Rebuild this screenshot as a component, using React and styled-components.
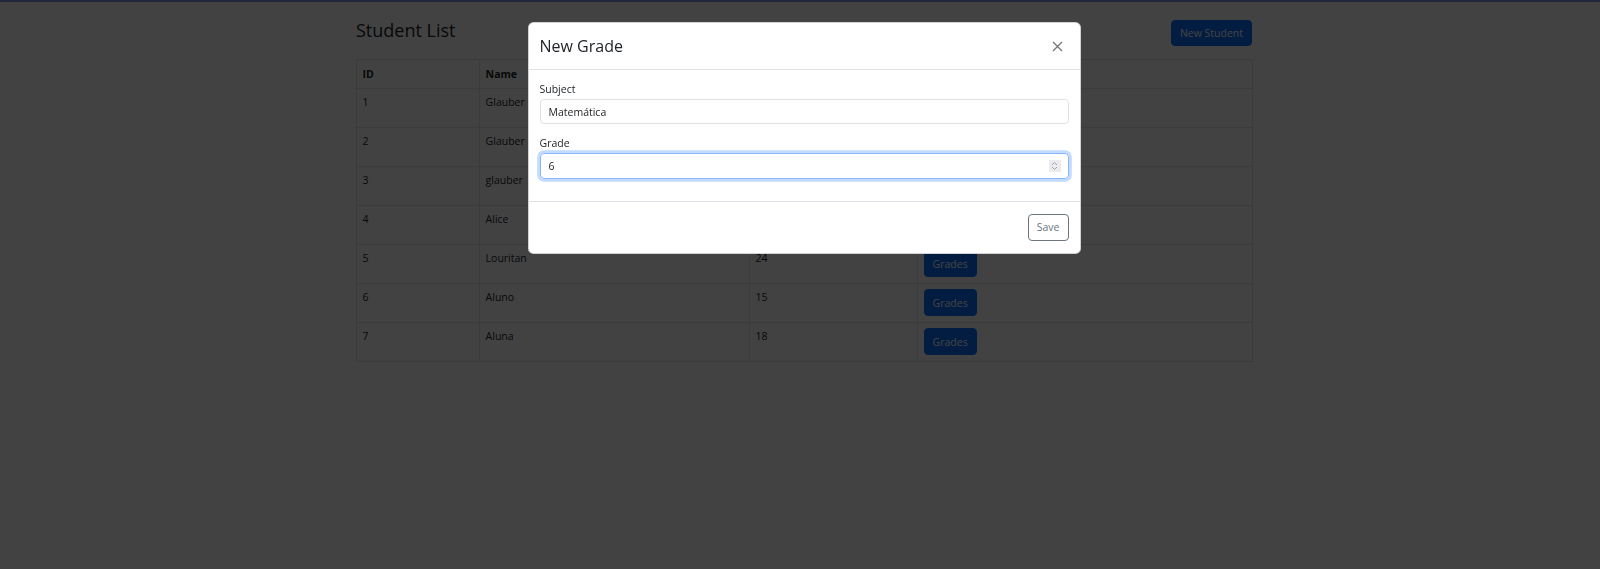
import React from "react";
import styled, { createGlobalStyle } from "styled-components";

const students = [
  { id: 1, name: "Glauber", age: 30 },
  { id: 2, name: "Glauber", age: 30 },
  { id: 3, name: "glauber", age: 30 },
  { id: 4, name: "Alice", age: 22 },
  { id: 5, name: "Louritan", age: 24 },
  { id: 6, name: "Aluno", age: 15 },
  { id: 7, name: "Aluna", age: 18 },
];

function App() {
  return (
    <>
      <GlobalStyle />
      <TopBar />
      <Page>
        <Container>
          <Header>
            <Title>Student List</Title>
            <PrimaryButton>New Student</PrimaryButton>
          </Header>
          <Table>
            <colgroup>
              <col style={{ width: 123 }} />
              <col style={{ width: 270 }} />
              <col style={{ width: 168 }} />
              <col style={{ width: 335 }} />
            </colgroup>
            <thead>
              <tr>
                <Th>ID</Th>
                <Th>Name</Th>
                <Th>Age</Th>
                <Th>Actions</Th>
              </tr>
            </thead>
            <tbody>
              {students.map((s) => (
                <tr key={s.id}>
                  <Td>{s.id}</Td>
                  <Td>{s.name}</Td>
                  <Td>{s.age}</Td>
                  <Td>
                    <PrimaryButton $row>Grades</PrimaryButton>
                  </Td>
                </tr>
              ))}
            </tbody>
          </Table>
        </Container>
      </Page>

      <Backdrop />
      <ModalWrapper>
        <Dialog>
          <ModalHeader>
            <ModalTitle>New Grade</ModalTitle>
            <CloseButton aria-label="Close">
              <svg width="11" height="11" viewBox="0 0 11 11">
                <path
                  d="M1 1 L10 10 M10 1 L1 10"
                  stroke="#757575"
                  strokeWidth="1.3"
                  fill="none"
                />
              </svg>
            </CloseButton>
          </ModalHeader>
          <ModalBody>
            <Field>
              <Label>Subject</Label>
              <InputShell>
                <Input defaultValue="Matemática" />
              </InputShell>
            </Field>
            <Field>
              <Label>Grade</Label>
              <InputShell $focused>
                <Input defaultValue="6" />
                <Spinner>
                  <svg width="7" height="10" viewBox="0 0 7 10">
                    <path
                      d="M1 4 L3.5 1.5 L6 4 M1 6 L3.5 8.5 L6 6"
                      stroke="#9a9a9a"
                      strokeWidth="0.9"
                      fill="none"
                    />
                  </svg>
                </Spinner>
              </InputShell>
            </Field>
          </ModalBody>
          <ModalFooter>
            <OutlineButton>Save</OutlineButton>
          </ModalFooter>
        </Dialog>
      </ModalWrapper>
    </>
  );
}

export default App;

const GlobalStyle = createGlobalStyle`
  html, body {
    margin: 0;
    background: #fff;
  }
  body {
    font-family: "Open Sans", "Noto Sans", sans-serif;
    font-size: 10.5px;
    line-height: 1.6;
    color: #212529;
  }
`;

const TopBar = styled.div`
  height: 2px;
  background: #8793e0;
`;

const Page = styled.div`
  padding: 18px 0 0 8px;
`;

const Container = styled.div`
  width: 896px;
  margin: 0 auto;
`;

const Header = styled.div`
  display: flex;
  justify-content: space-between;
  align-items: flex-start;
  margin-bottom: 13px;
`;

const Title = styled.h2`
  margin: 0;
  font-size: 18px;
  font-weight: 400;
  line-height: 1.2;
`;

const PrimaryButton = styled.button`
  height: ${(p) => (p.$row ? "27px" : "26px")};
  padding: 0 8px;
  font-family: inherit;
  font-size: 10.5px;
  color: #fff;
  background: #0d6efd;
  border: 1px solid #0d6efd;
  border-radius: 4px;
`;

const Table = styled.table`
  width: 896px;
  table-layout: fixed;
  border-collapse: collapse;
`;

const Th = styled.th`
  padding: 5.6px;
  text-align: left;
  font-weight: 700;
  border: 1px solid #dee2e6;
`;

const Td = styled.td`
  padding: 5.5px 5.6px;
  vertical-align: top;
  border: 1px solid #dee2e6;
`;

const Backdrop = styled.div`
  position: fixed;
  inset: 0;
  background: rgba(0, 0, 0, 0.74);
  z-index: 10;
`;

const ModalWrapper = styled.div`
  position: fixed;
  inset: 0;
  z-index: 20;
  display: flex;
  justify-content: center;
  align-items: flex-start;
  padding: 22px 0 0 8px;
`;

const Dialog = styled.div`
  width: 551px;
  background: #fff;
  border: 1px solid rgba(0, 0, 0, 0.175);
  border-radius: 5.6px;
  display: flex;
  flex-direction: column;
`;

const ModalHeader = styled.div`
  display: flex;
  align-items: center;
  justify-content: space-between;
  padding: 11px;
  border-bottom: 1px solid #dee2e6;
`;

const ModalTitle = styled.h5`
  margin: 0;
  font-size: 16px;
  font-weight: 400;
  line-height: 24px;
`;

const CloseButton = styled.button`
  display: flex;
  align-items: center;
  justify-content: center;
  width: 16px;
  height: 16px;
  padding: 0;
  margin-right: 3px;
  background: none;
  border: 0;
`;

const ModalBody = styled.div`
  padding: 11px;
`;

const Field = styled.div`
  margin-bottom: 11px;
`;

const Label = styled.label`
  display: block;
  margin-bottom: 1px;
`;

const InputShell = styled.div`
  display: flex;
  align-items: center;
  height: 25.5px;
  box-sizing: border-box;
  padding: 0 7px 0 8px;
  border: 1px solid ${(p) => (p.$focused ? "#86b7fe" : "#dee2e6")};
  border-radius: 4px;
  box-shadow: ${(p) =>
    p.$focused ? "0 0 0 2.8px rgba(13, 110, 253, 0.25)" : "none"};
`;

const Input = styled.input`
  flex: 1;
  min-width: 0;
  padding: 0;
  border: 0;
  outline: none;
  background: transparent;
  font-family: inherit;
  font-size: 10.5px;
  color: #212529;
`;

const Spinner = styled.span`
  display: flex;
  align-items: center;
  justify-content: center;
  width: 12px;
  height: 12px;
  background: #ebebef;
`;

const ModalFooter = styled.div`
  display: flex;
  justify-content: flex-end;
  padding: 12px 11px;
  border-top: 1px solid #dee2e6;
`;

const OutlineButton = styled.button`
  height: 27px;
  padding: 0 8px;
  font-family: inherit;
  font-size: 10.5px;
  color: #6c757d;
  background: #fff;
  border: 1px solid #6c757d;
  border-radius: 4px;
`;
